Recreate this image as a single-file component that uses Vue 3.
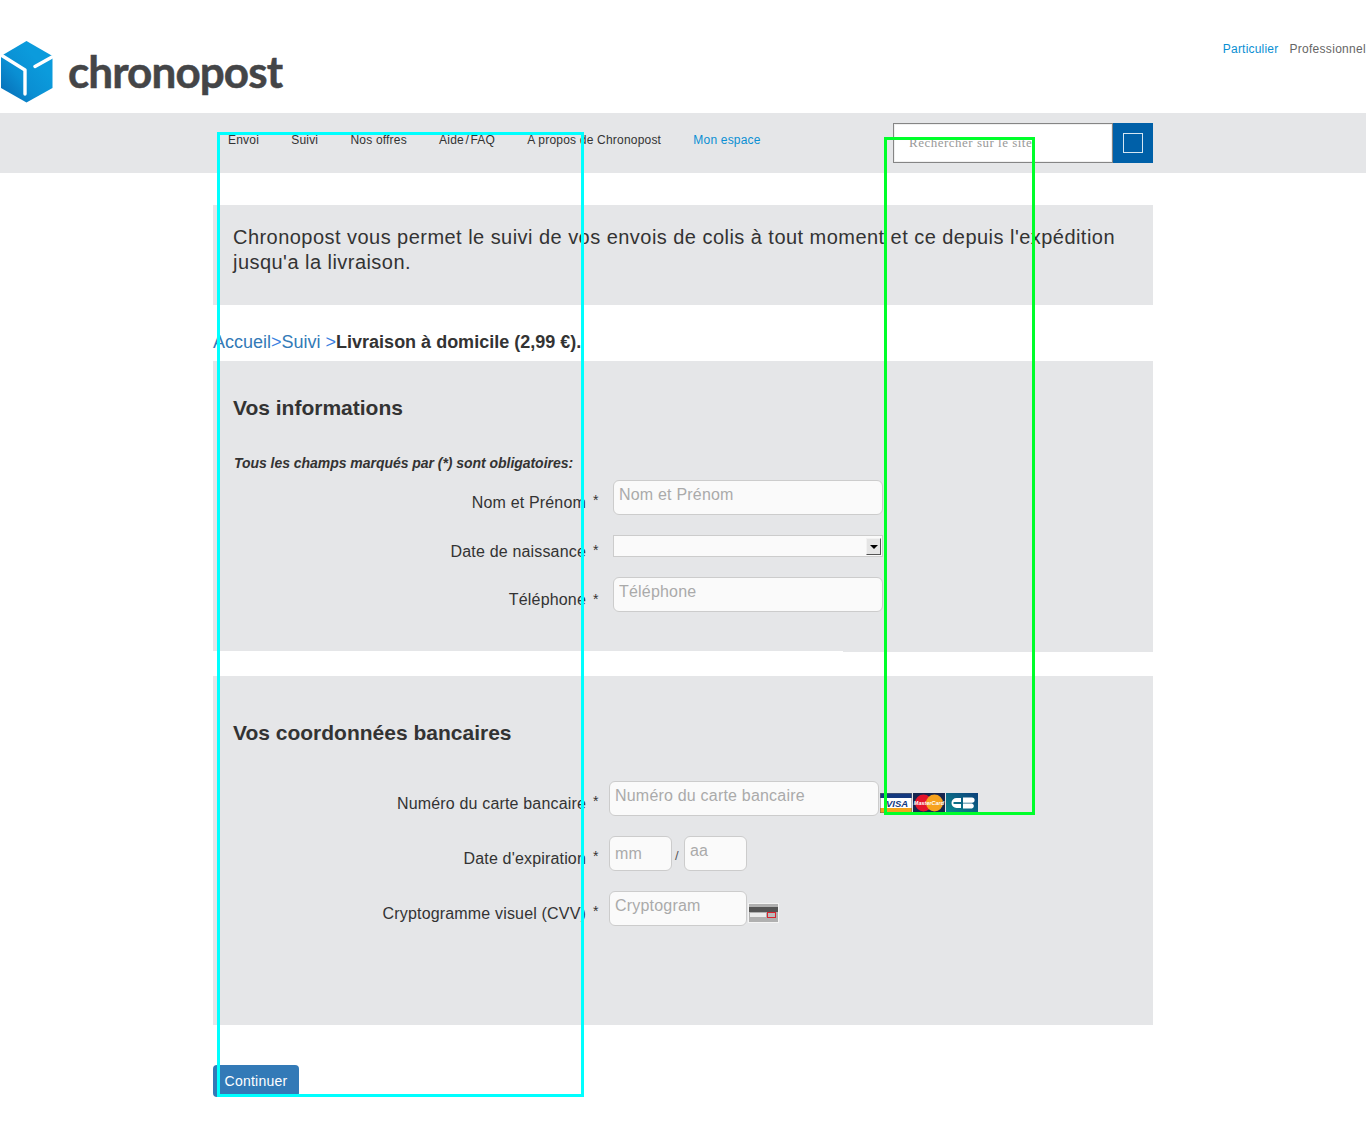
<template>
  <div class="page">
    <header class="top">
      <a class="logo">
        <svg class="cube" width="53" height="62" viewBox="0 0 53 62">
          <defs>
            <linearGradient id="cubeFill" x1="0" y1="1" x2="0.7" y2="0.3">
              <stop offset="0" stop-color="#0667b1" />
              <stop offset="0.55" stop-color="#0a8fd3" />
              <stop offset="1" stop-color="#0b9bdc" />
            </linearGradient>
          </defs>
          <path d="M26.5 0 L52.5 15 V47 L26.5 61.5 L1 47 V15 Z" fill="url(#cubeFill)" />
          <path d="M1 14 L25 29 V53" fill="none" stroke="#fff" stroke-width="3.4" stroke-linecap="round" stroke-linejoin="round" />
          <path d="M35 25.5 L52 16" fill="none" stroke="#fff" stroke-width="3.4" stroke-linecap="round" />
        </svg>
        <span class="logo-text">chronopost</span>
      </a>
      <div class="segments">
        <a class="seg seg--on">Particulier</a>
        <a class="seg">Professionnel</a>
      </div>
    </header>

    <div class="navband">
      <div class="wrap navrow">
        <nav class="menu">
          <a v-for="item in menu" :key="item">{{ item }}</a>
          <a class="menu-space">Mon espace</a>
        </nav>
        <div class="search">
          <input class="search-input" placeholder="Rechercher sur le site" />
          <button class="search-btn"><span class="search-icon"></span></button>
        </div>
      </div>
    </div>

    <main class="wrap">
      <section class="intro">
        Chronopost vous permet le suivi de vos envois de colis à tout moment et ce depuis l'expédition jusqu'a la livraison.
      </section>

      <p class="crumbs">
        <a>Accueil</a><span class="sep">&gt;</span><a>Suivi</a> <span class="sep">&gt;</span><strong>Livraison à domicile (2,99 €).</strong>
      </p>

      <section class="panel panel--info">
        <h2>Vos informations</h2>
        <p class="note">Tous les champs marqués par (*) sont obligatoires:</p>

        <div class="row row--name">
          <label>Nom et Prénom</label><span class="star">*</span>
          <input class="field" placeholder="Nom et Prénom" />
        </div>
        <div class="row row--birth">
          <label>Date de naissance</label><span class="star">*</span>
          <div class="fake-select"><span class="arrow"></span></div>
        </div>
        <div class="row row--phone">
          <label>Téléphone</label><span class="star">*</span>
          <input class="field" placeholder="Téléphone" />
        </div>
      </section>

      <section class="panel panel--bank">
        <h2>Vos coordonnées bancaires</h2>

        <div class="row row--bank row--card">
          <label>Numéro du carte bancaire</label><span class="star">*</span>
          <input class="field" placeholder="Numéro du carte bancaire" />
          <div class="cards">
            <svg width="32" height="20" viewBox="0 0 32 20">
              <rect width="32" height="20" fill="#fff" />
              <rect width="32" height="5" fill="#14397f" />
              <rect y="15" width="32" height="5" fill="#f4a41c" />
              <rect x="0" y="0" width="32" height="20" fill="none" stroke="#666" stroke-width="1" />
              <text x="6" y="14" class="visa">VISA</text>
            </svg>
            <svg width="32" height="20" viewBox="0 0 32 20">
              <rect width="32" height="20" fill="#16264f" />
              <circle cx="10.5" cy="10" r="8.5" fill="#e4152b" />
              <circle cx="21.5" cy="10" r="8.5" fill="#f6a21e" />
              <text x="16" y="12" class="mc">MasterCard</text>
            </svg>
            <svg width="32" height="20" viewBox="0 0 32 20">
              <defs>
                <linearGradient id="cbFill" x1="0" y1="1" x2="1" y2="0">
                  <stop offset="0" stop-color="#0b8d8f" />
                  <stop offset="1" stop-color="#0c3f7a" />
                </linearGradient>
              </defs>
              <rect width="32" height="20" fill="url(#cbFill)" />
              <path d="M15 5 H10.5 a5 5 0 0 0 0 10 H15 V11 H7.5 V9 H15 Z" fill="#fff" />
              <path d="M17 4.5 H26 a2.6 2.6 0 0 1 0 5.2 H17 Z M17 10.6 H26 a2.6 2.6 0 0 1 0 5 H17 Z" fill="#fff" />
            </svg>
          </div>
        </div>
        <div class="row row--bank row--expiry">
          <label>Date d'expiration</label><span class="star">*</span>
          <input class="field field--short field--mm" placeholder="mm" />
          <span class="slash">/</span>
          <input class="field field--short" placeholder="aa" />
        </div>
        <div class="row row--bank row--cvv">
          <label>Cryptogramme visuel (CVV)</label><span class="star">*</span>
          <input class="field field--cvv" placeholder="Cryptogram" />
          <svg class="cvv-icon" width="31" height="20" viewBox="0 0 31 20">
            <rect width="31" height="20" fill="#f4f4f4" />
            <rect x="1" y="1" width="29" height="18" fill="#b0b0b0" />
            <rect x="1" y="4" width="29" height="5" fill="#555" />
            <rect x="2" y="10" width="16" height="4" fill="#ececec" />
            <rect x="19.5" y="9.5" width="8" height="5" fill="#bbb" stroke="#d8232f" stroke-width="1" />
          </svg>
        </div>
      </section>

      <button class="continue">Continuer</button>
    </main>

    <div class="mark mark--cyan"></div>
    <div class="mark mark--green"></div>
  </div>
</template>

<script setup>
const menu = ['Envoi', 'Suivi', 'Nos offres', 'Aide / FAQ', 'A propos de Chronopost']
</script>

<style>
html, body {
  margin: 0;
  background: #fff;
}
</style>

<style scoped>
.page {
  position: relative;
  height: 1132px;
  overflow: hidden;
  font-family: "Liberation Sans", Arial, sans-serif;
  color: #333;
}

.wrap {
  width: 940px;
  margin: 0 auto;
}

.top {
  display: flex;
  justify-content: space-between;
  height: 113px;
}

.logo {
  display: flex;
  align-items: flex-start;
  gap: 15px;
  padding: 41px 0 0;
}

.logo-text {
  margin-top: 4px;
  color: #444547;
  font-family: Lato, "Open Sans", sans-serif;
  font-size: 44px;
  font-weight: 700;
  line-height: 52px;
  letter-spacing: -0.9px;
  -webkit-text-stroke: 0.5px #444547;
}

.segments {
  display: flex;
  gap: 11px;
  padding-top: 42px;
  font-size: 12px;
  line-height: 14px;
  letter-spacing: 0.3px;
  color: #666;
}

.seg--on {
  color: #0a8fd3;
  letter-spacing: 0.2px;
}

.navband {
  height: 60px;
  background: #e5e6e8;
}

.navrow {
  display: flex;
  justify-content: space-between;
  padding-top: 10px;
}

.menu {
  display: flex;
  gap: 32.2px;
  padding: 10px 0 0 15px;
  font-size: 12px;
  line-height: 14px;
  letter-spacing: 0.2px;
  color: #333;
}

.menu a:nth-child(4) {
  word-spacing: -2px;
}

.menu-space {
  color: #0a8fd3;
}

.search {
  display: flex;
  height: 40px;
}

.search-input {
  box-sizing: border-box;
  width: 220px;
  height: 40px;
  padding: 0 15px;
  border: 1px solid #858585;
  box-shadow: inset 0 0 0 1px #f0f0f0;
  background: #fff;
  font-family: "Liberation Serif", serif;
  font-size: 13px;
  letter-spacing: 0.5px;
  outline: none;
}

.search-input::placeholder {
  color: #999;
  opacity: 1;
}

.search-btn {
  display: flex;
  align-items: center;
  justify-content: center;
  width: 40px;
  height: 40px;
  padding: 0;
  border: 0;
  background: #0060a8;
}

.search-icon {
  box-sizing: border-box;
  width: 20px;
  height: 20px;
  border: 1px solid #d5e6f2;
}

.intro {
  box-sizing: border-box;
  height: 100px;
  margin-top: 32px;
  padding: 20px 20px 0;
  background: #e5e6e8;
  font-size: 20px;
  line-height: 25px;
  letter-spacing: 0.46px;
}

.crumbs {
  height: 56px;
  margin: 0;
  padding-top: 25px;
  box-sizing: border-box;
  font-size: 18px;
  line-height: 24px;
  color: #337ab7;
}

.crumbs .sep {
  color: #3b7fe0;
}

.crumbs strong {
  color: #333;
}

.panel {
  box-sizing: border-box;
  padding: 0 20px;
  background: #e5e6e8;
}

.panel h2 {
  margin: 0;
  font-size: 21px;
  font-weight: 700;
  line-height: 24px;
}

.panel--info {
  position: relative;
  height: 290px;
  padding-top: 35px;
}

.panel--info::after {
  content: "";
  position: absolute;
  left: 630px;
  right: 0;
  bottom: -1px;
  height: 1px;
  background: #e5e6e8;
}

.panel--bank {
  height: 349px;
  margin-top: 25px;
  padding-top: 45px;
}

.note {
  margin: 35px 0 0 1px;
  font-size: 14px;
  font-style: italic;
  font-weight: 700;
  line-height: 16px;
  letter-spacing: -0.04px;
}

.row {
  display: flex;
  align-items: flex-start;
}

.row label {
  box-sizing: border-box;
  flex: none;
  width: 353px;
  padding-top: 14px;
  font-size: 16px;
  line-height: 18px;
  letter-spacing: 0.17px;
  text-align: right;
}

.star {
  flex: none;
  width: 27px;
  padding: 12px 0 0 7px;
  box-sizing: border-box;
  font-size: 14px;
  line-height: 16px;
}

.row--name {
  margin-top: 9px;
}

.row--birth {
  margin-top: 20px;
}

.row--birth label {
  padding-top: 8px;
}

.row--birth .star {
  padding-top: 7px;
}

.row--phone {
  margin-top: 16px;
}

.row--phone .star {
  padding-top: 14px;
}

.row--bank .star {
  width: 23px;
}

.row--card {
  margin-top: 36px;
}

.row--expiry {
  margin-top: 20px;
}

.row--cvv {
  margin-top: 20px;
}

.field {
  box-sizing: border-box;
  width: 270px;
  height: 35px;
  padding: 0 5px 6px;
  border: 1px solid #ccc;
  border-radius: 6px;
  background: #fafafa;
  font-family: "Liberation Sans", Arial, sans-serif;
  font-size: 16px;
  letter-spacing: 0.2px;
  outline: none;
}

.field::placeholder {
  color: #aaa;
  opacity: 1;
}

.field--short {
  width: 63px;
}

.field--mm {
  padding-bottom: 0;
}

.field--cvv {
  width: 138px;
}

.fake-select {
  position: relative;
  box-sizing: border-box;
  width: 270px;
  height: 22px;
  border: 1px solid #ccc;
  background: #fafafa;
}

.arrow {
  position: absolute;
  top: 2px;
  right: 1px;
  box-sizing: border-box;
  width: 15px;
  height: 17px;
  border: 1px solid;
  border-color: #f2f2f2 #555 #555 #f2f2f2;
  background: #e5e5e5;
}

.arrow::after {
  content: "";
  position: absolute;
  top: 6px;
  left: 3px;
  border: 4px solid transparent;
  border-top: 4px solid #000;
  border-bottom: 0;
}

.slash {
  box-sizing: border-box;
  width: 12px;
  padding: 12px 0 0 3px;
  color: #555;
  font-size: 13px;
  line-height: 16px;
}

.cards {
  display: flex;
  gap: 1px;
  margin: 12px 0 0 1px;
}

.visa {
  fill: #14397f;
  font-family: "Liberation Sans", sans-serif;
  font-size: 9.5px;
  font-style: italic;
  font-weight: 700;
}

.mc {
  fill: #fff;
  font-family: "Liberation Sans", sans-serif;
  font-size: 5.5px;
  font-style: italic;
  font-weight: 700;
  text-anchor: middle;
}

.cvv-icon {
  flex: none;
  margin: 12px 0 0 1px;
}

.continue {
  display: block;
  width: 86px;
  height: 32px;
  margin-top: 40px;
  padding: 0;
  border: 0;
  border-radius: 4px;
  background: #337ab7;
  color: #fff;
  font-family: "Liberation Sans", Arial, sans-serif;
  font-size: 14px;
  letter-spacing: 0.25px;
}

.mark {
  position: absolute;
  box-sizing: border-box;
  border-style: solid;
  pointer-events: none;
}

.mark--cyan {
  left: 217px;
  top: 132px;
  width: 367px;
  height: 965px;
  border-width: 3px;
  border-color: #00ffff;
}

.mark--green {
  left: 884px;
  top: 137px;
  width: 151px;
  height: 678px;
  border-width: 3px;
  border-color: #00ff2a;
}
</style>
